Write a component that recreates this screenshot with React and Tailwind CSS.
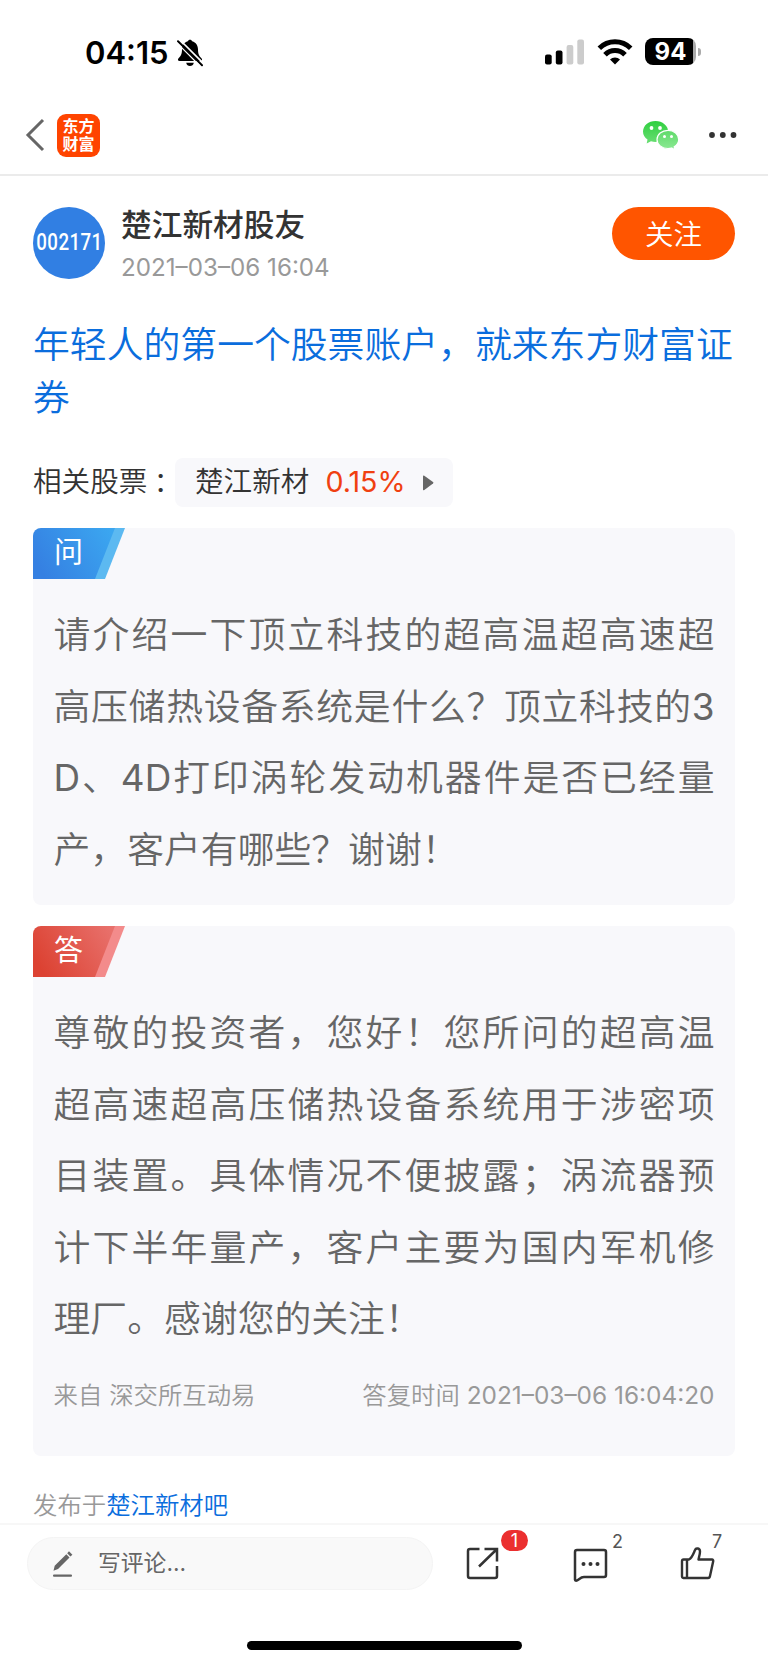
const question = [
    "请介绍一下顶立科技的超高温超高速超",
    "高压储热设备系统是什么？顶立科技的3",
    "D、4D打印涡轮发动机器件是否已经量",
    "产，客户有哪些？谢谢！",
];

const answer = [
    "尊敬的投资者，您好！您所问的超高温",
    "超高速超高压储热设备系统用于涉密项",
    "目装置。具体情况不便披露；涡流器预",
    "计下半年量产，客户主要为国内军机修",
    "理厂。感谢您的关注！",
];

const StatusBar = () => {
    return (
    <div className="h-[103px] shrink-0 flex items-start justify-between pl-[85px] pr-[67px] pt-[37px]">
        <div className="flex items-center h-[30px]">
            <div className="text-[31px] leading-[30px] font-semibold text-black w-[92px] pt-[2px]">04:15</div>
            <svg width="26" height="28" viewBox="0 0 26 28" className="mt-[2px]">
                <path d="M13 0.8c-1 0-1.9.6-2.2 1.5C7 3.4 5 6.5 5 10.5c0 4.6-1.3 6.7-3.2 8.4-1.5 1.4-1 3.1.9 3.1h20.6c1.9 0 2.4-1.7.9-3.1C22.3 17.2 21 15.1 21 10.5c0-4-2-7.1-5.800-8.2C14.9 1.4 14 .8 13 .8zM9.200 23.7h7.6c-.4 2.1-1.900 3.3-3.800 3.3s-3.400-1.200-3.800-3.300z" fill="#000" />
                <path d="M2.500 0.500L27 25" stroke="#fff" strokeWidth="1.600" />
                <path d="M1 2.200L25 26.200" stroke="#000" strokeWidth="2" strokeLinecap="round" />
                <path d="M-1 3L23 27" stroke="#fff" strokeWidth="1.200" />
            </svg>
        </div>
        <div className="flex items-center h-[29px]">
            <svg width="40" height="26" viewBox="0 0 40 26">
                <rect x="0" y="15.500" width="6.700" height="10" rx="2" fill="#000" />
                <rect x="10.800" y="11.500" width="6.700" height="14" rx="2" fill="#000" />
                <rect x="21.600" y="6" width="6.700" height="19.500" rx="2" fill="#ccc" />
                <rect x="32.300" y="0.500" width="6.700" height="25" rx="2" fill="#ccc" />
            </svg>
            <svg width="36" height="26" viewBox="0 0 36 26" className="ml-[12px]">
                <g fill="none" stroke="#000" strokeWidth="5">
                    <path d="M2.300 9.300a22.300 22.300 0 0 1 31.400 0" />
                    <path d="M8 15.800a14 14 0 0 1 20 0" />
                </g>
                <path d="M18 25.500l-5-5a7 7 0 0 1 10 0z" fill="#000" />
            </svg>
            <div className="ml-[12px] w-[51px] h-[27px] rounded-[8px] overflow-hidden bg-[linear-gradient(90deg,#000_0,#000_48px,#aaa_48px)] text-white text-[24px] font-bold leading-[28px] text-center">94</div>
            <div className="ml-[2px] w-[3px] h-[8px] rounded-r-full bg-[#aaa]" />
        </div>
    </div>
    );
};

const Header = () => {
    return (
    <div className="h-[73px] shrink-0 flex items-center justify-between border-b-2 border-[#ebebeb] pl-[25px] pr-[31px] pb-[7px]">
        <div className="flex items-center">
            <svg width="20" height="34" viewBox="0 0 20 34" fill="none" stroke="#666" strokeWidth="3">
                <path d="M18 2L3 17l15 15" />
            </svg>
            <div className="ml-[12px] w-[43px] h-[43px] rounded-[9px] bg-[#ff4400] text-white text-[16px] leading-[18px] font-bold text-center pt-[3px]">
                东方<br />财富
            </div>
        </div>
        <div className="flex items-center">
            <svg width="38" height="30" viewBox="0 0 38 30">
                <defs>
                    <linearGradient id="wx" x1="0" y1="0" x2="0" y2="1">
                        <stop offset="0" stopColor="#2fcf3f" />
                        <stop offset="1" stopColor="#6ade74" />
                    </linearGradient>
                    <linearGradient id="wx2" x1="0" y1="0" x2="0" y2="1">
                        <stop offset="0" stopColor="#5fda69" />
                        <stop offset="1" stopColor="#8ce994" />
                    </linearGradient>
                </defs>
                <path d="M13.500 1C6.500 1 1 5.600 1 11.600c0 3.300 1.700 6.100 4.500 8L4.700 23.500l4.300-2.200c1.400.4 2.900.6 4.500.6 7 0 12.700-4.600 12.700-10.300S20.500 1 13.500 1z" fill="url(#wx)" />
                <path d="M26 10.300c-6.200 0-11 4-11 9.100s4.800 9.100 11 9.100c1.300 0 2.500-.2 3.600-.5l3.200 1.700-.6-3c2.900-1.800 4.500-4.300 4.500-7.300 0-5.100-4.600-9.100-10.700-9.100z" fill="url(#wx2)" stroke="#fff" strokeWidth="1.200" />
                <circle cx="9.500" cy="8" r="1.900" fill="#fff" />
                <circle cx="18" cy="8" r="1.900" fill="#fff" />
                <circle cx="22.500" cy="16.600" r="1.500" fill="#fff" />
                <circle cx="29.500" cy="16.600" r="1.500" fill="#fff" />
            </svg>
            <svg width="28" height="6" viewBox="0 0 28 6" fill="#333" className="ml-[29px]">
                <circle cx="3" cy="3" r="2.900" />
                <circle cx="13.800" cy="3" r="2.900" />
                <circle cx="24.500" cy="3" r="2.900" />
            </svg>
        </div>
    </div>
    );
};

const Author = () => {
    return (
    <div className="flex items-start">
        <div className="w-[72px] h-[72px] rounded-full bg-[#317fe3] text-white font-['Roboto'] font-medium text-[24px] leading-[70px] whitespace-nowrap flex justify-center">
            <span className="scale-x-[0.78] tracking-[0.5px]">002171</span>
        </div>
        <div className="ml-[16px]">
            <div className="text-[30.700px] leading-[36px] font-medium text-[#333]">楚江新材股友</div>
            <div className="mt-[7px] text-[24.200px] leading-[36px] font-normal text-[#999]">2021–03–06 16:04</div>
        </div>
        <button className="ml-auto w-[123px] h-[53px] rounded-full bg-[#ff5500] text-white text-[28.500px] leading-[55px]">关注</button>
    </div>
    );
};

const Tag = ({ label, id, from, to, edge }) => {
    return (
    <div className="relative w-[92px] h-[51px]">
        <svg width="92" height="51" viewBox="0 0 92 51" className="block">
            <defs>
                <linearGradient id={id} x1="0" y1="0.6" x2="1" y2="0.2">
                    <stop offset="0" stopColor={from} />
                    <stop offset="1" stopColor={to} />
                </linearGradient>
            </defs>
            <path d="M70 0h22L72 51H50z" fill={edge} />
            <path d="M8 0h74L62 51H0V8a8 8 0 0 1 8-8z" fill={`url(#${id})`} />
        </svg>
        <span className="absolute left-[21px] top-[7px] text-[29px] leading-[36px] font-normal text-white">{label}</span>
    </div>
    );
};

// latin letters and digits need a step more weight than the hanzi beside them
const Mixed = ({ text }) => {
    return text.split(/([0-9A-Z]+)/).map((part, i) => (
        i % 2 ? <span key={i} className="font-normal">{part}</span> : part
    ));
};

const Lines = ({ lines }) => {
    return (
    <div className="px-[20.500px] pt-[20px] text-[36.850px] leading-[71.500px] text-[#666]">
        {lines.map((line, i) => (
            <p key={line} className={i < lines.length - 1 ? "whitespace-nowrap [text-align-last:justify]" : "whitespace-nowrap"}><Mixed text={line} /></p>
        ))}
    </div>
    );
};

const BottomBar = () => {
    return (
    <div className="h-[142px] shrink-0 bg-white border-t-2 border-[#f7f7f7] flex flex-col justify-between items-center">
        <div className="w-full flex items-start pl-[27px] pt-[12px]">
            <div className="w-[406px] h-[53px] rounded-full bg-[#f9f9f9] border border-[#f4f4f4] flex items-center pl-[24px]">
                <svg width="22" height="28" viewBox="0 0 22 28" fill="#666">
                    <path d="M14.300 4.200l3.200 3.200L6 19l-4.500 1.700L2.700 15.800zM15.200 3.300L17 1.300l3.400 3.400-2 1.800z" />
                    <rect x="1" y="24.500" width="19" height="2.200" rx="1" />
                </svg>
                <span className="ml-[24px] text-[22.800px] font-normal text-[#666]">写评论...</span>
            </div>
            <div className="relative ml-[32px] mt-[9px]">
                <svg width="36" height="36" viewBox="0 0 36 36" fill="none" stroke="#333" strokeWidth="2.500">
                    <path d="M14.500 3H5a2 2 0 0 0-2 2v25a2 2 0 0 0 2 2h25a2 2 0 0 0 2-2V20M19.500 3H32v12.500M32 3L14 20.500" />
                </svg>
                <span className="absolute left-[36px] top-[-16px] w-[27px] h-[21px] rounded-full bg-[#eb2f2f] text-white text-[18px] leading-[21px] font-normal text-center">1</span>
            </div>
            <div className="relative ml-[71px] mt-[9px]">
                <svg width="36" height="38" viewBox="0 0 36 38" fill="none" stroke="#333" strokeWidth="2.500">
                    <path d="M5 4h27a2 2 0 0 1 2 2v23a2 2 0 0 1-2 2H12c-4 0-5.500 3.500-8 3.700-.6 0-1-.3-1-.9V6a2 2 0 0 1 2-2z" />
                    <g fill="#333" stroke="none">
                        <circle cx="11.500" cy="18" r="2" />
                        <circle cx="18.500" cy="18" r="2" />
                        <circle cx="25.500" cy="18" r="2" />
                    </g>
                </svg>
                <span className="absolute left-[40px] top-[-15px] text-[18px] leading-[22px] font-normal text-[#555]">2</span>
            </div>
            <div className="relative ml-[71px] mt-[9px]">
                <svg width="36" height="36" viewBox="0 0 36 36" fill="none" stroke="#333" strokeWidth="2.400" strokeLinejoin="round">
                    <path d="M4.500 13.500H10c3-1.500 4.500-6 6-9.500 1-2.600 5-1.800 5 1.500 0 2.500-1 5.500-1.500 8H33c1 0 1.400.8 1.200 1.800L31 30c-.2 1.300-.8 2-2 2H4.500A1.800 1.800 0 0 1 3 30V15.300c0-1 .6-1.800 1.500-1.800zM8 13.500V32" />
                </svg>
                <span className="absolute left-[33px] top-[-15px] text-[18px] leading-[22px] font-normal text-[#555]">7</span>
            </div>
        </div>
        <div className="w-[275px] h-[9px] rounded-full bg-black mb-[15px]" />
    </div>
    );
};

const App = () => {
    return (
    <div className="w-[768px] h-[1665px] bg-white overflow-hidden flex flex-col font-['Inter','Noto_Sans_CJK_SC',sans-serif] font-[350]">
        <StatusBar />
        <Header />
        <div className="flex-1 min-h-0 px-[33px] pt-[31px]">
            <Author />
            <h1 className="mt-[32px] text-[36.850px] leading-[53px] font-[350] text-[#0a6ddd] -mr-2">年轻人的第一个股票账户，就来东方财富证<br />券</h1>
            <div className="mt-[34px] flex items-center text-[28.600px] text-[#333]">
                <span className="w-[142px] whitespace-nowrap">相关股票<span className="ml-[6px]">：</span></span>
                <div className="w-[278px] h-[49px] rounded-[8px] bg-[#f8f8fb] flex items-center pl-[20px]">
                    <span>楚江新材</span>
                    <span className="ml-[16px] font-normal text-[#f04010]">0.15%</span>
                    <svg width="11" height="16" viewBox="0 0 11 16" fill="#666" className="ml-[17px]">
                        <path d="M0 1.500Q0 0 1.300 .8L10 7q1 .8 0 1.600L1.300 15Q0 15.800 0 14.500z" />
                    </svg>
                </div>
            </div>
            <div className="mt-[21px] h-[377px] rounded-[8px] bg-[#f8f8fb]">
                <Tag label="问" id="ask" from="#3580e2" to="#3ba6f0" edge="#5cb9f1" />
                <Lines lines={question} />
            </div>
            <div className="mt-[21px] h-[530px] rounded-[8px] bg-[#f8f8fb]">
                <Tag label="答" id="reply" from="#dc4232" to="#e8706b" edge="#f38b8b" />
                <Lines lines={answer} />
                <div className="px-[20.500px] mt-[22px] flex justify-between text-[24.400px] leading-[36px] text-[#999]">
                    <span>来自 深交所互动易</span>
                    <span>答复时间 <span className="font-normal">2021–03–06 16:04:20</span></span>
                </div>
            </div>
            <div className="mt-[31px] text-[24.400px] leading-[36px] text-[#999]">发布于<span className="text-[#0a6ddd]">楚江新材吧</span></div>
        </div>
        <BottomBar />
    </div>
    );
};

export default App;
